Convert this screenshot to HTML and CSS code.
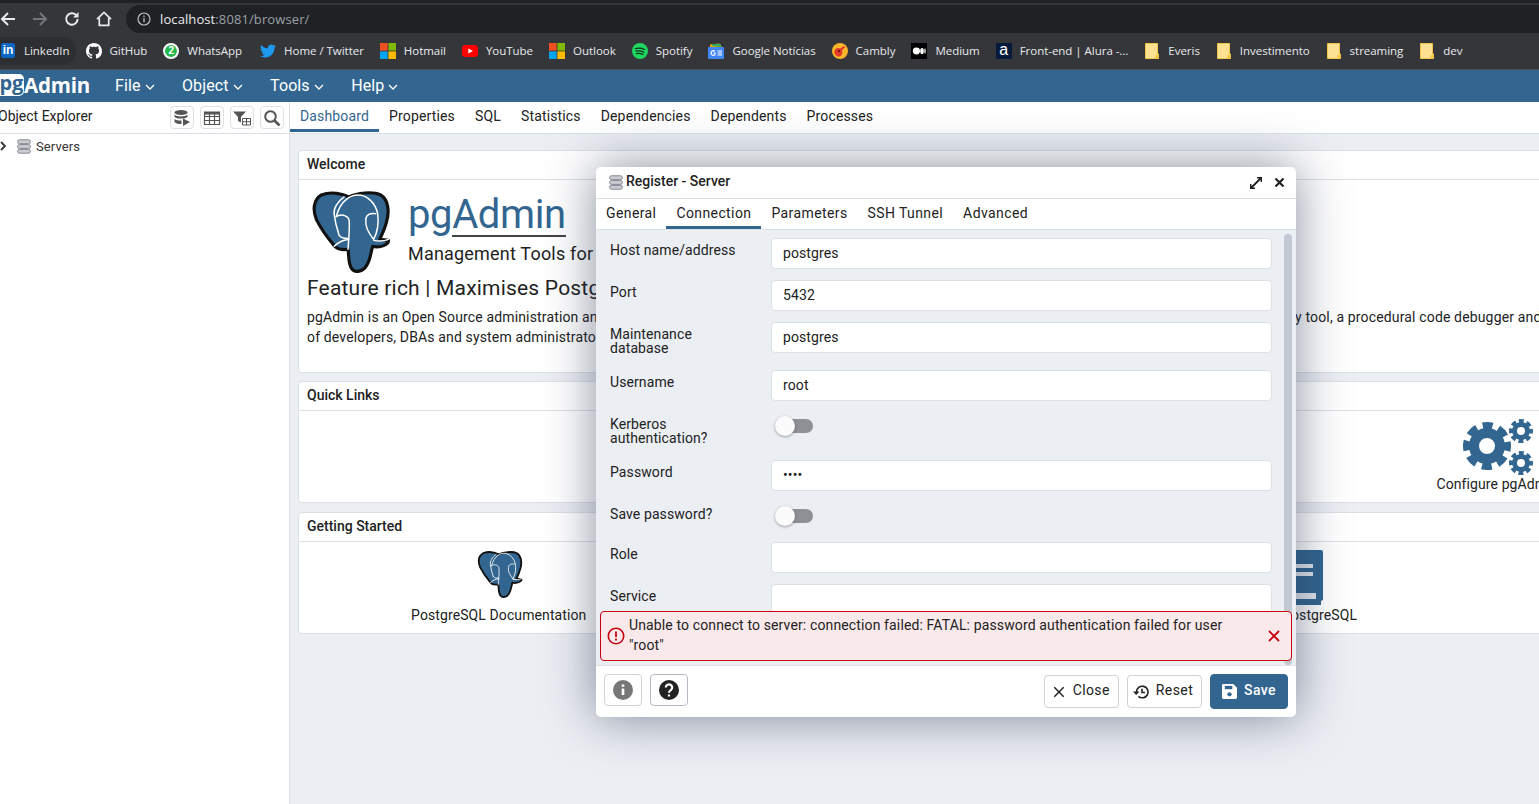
FILE: index.html
```html
<!DOCTYPE html>
<html lang="en">
<head>
<meta charset="utf-8">
<title>pgAdmin 4</title>
<link rel="stylesheet" href="styles.css">
</head>
<body>
<svg class="defs" width="0" height="0" aria-hidden="true">
  <symbol id="elephant" viewBox="1 -1 78 83">
    <path d="M10 3C20-1 32 2 38 5C46 1 62-1 70 3C78 8 79 20 76 30C74 38 71 44 69 48L78 49C78 53 70 57 62 55C60 60 60 68 56 74C52 81 44 82 41 78C37 73 38 65 37 58C30 59 24 57 22 53C16 46 9 36 5 28C1 18 2 8 10 3Z" fill="#326690" stroke="#111" stroke-width="3.200" stroke-linejoin="round"/>
    <path d="M33 5C26 10 22 17 23 23C24 31 26 38 28 44M25 25C30 6 42 3 47 3C57 3 65 12 67 22C68 30 68 38 63 48M25 25C29 22 36 23 38 28C39 35 38 42 37 58M65 22C60 21 55 23 55 28C54 36 58 42 63 48M23 55C27 51 33 48 38 48M63 49C68 50 73 50 78 48M28 44C31 47 33 47 37 47" fill="none" stroke="#fff" stroke-width="1.500" stroke-linecap="round"/>
  </symbol>
  <symbol id="servers" viewBox="0 0 14 15">
    <g fill="#c9ccd3" stroke="#7d8089" stroke-width=".9"><rect x=".6" y=".8" width="12.800" height="3.800" rx="1.800"/><rect x=".6" y="5.600" width="12.800" height="3.800" rx="1.800"/><rect x=".6" y="10.400" width="12.800" height="3.800" rx="1.800"/></g>
  </symbol>
  <symbol id="folder" viewBox="0 0 14 16">
    <path d="M.5.5H12.500V11H13.500V15.500H.5Z" fill="#fde293" stroke="#f4c542"/><path d="M10.500 12H13.500V15.500H10.500Z" fill="#f4c542"/>
  </symbol>
  <symbol id="ms" viewBox="0 0 16 16">
    <rect width="7.600" height="7.600" fill="#f25022"/><rect x="8.400" width="7.600" height="7.600" fill="#7fba00"/><rect y="8.400" width="7.600" height="7.600" fill="#00a4ef"/><rect x="8.400" y="8.400" width="7.600" height="7.600" fill="#ffb900"/>
  </symbol>
  <symbol id="cog" viewBox="-24 -24 48 48">
    <circle r="20" fill="none" stroke="#326690" stroke-width="8" stroke-dasharray="9.700 6.008" stroke-dashoffset="4.850"/>
    <circle r="13" fill="none" stroke="#326690" stroke-width="10"/>
  </symbol>
</svg>

<header class="chrome">
  <svg class="nav-ic" viewBox="0 0 16 16"><path d="M15 8H2M8 2 2 8l6 6" fill="none" stroke="#e8eaed" stroke-width="2"/></svg>
  <svg class="nav-ic dim" viewBox="0 0 16 16"><path d="M1 8H14M8 2l6 6-6 6" fill="none" stroke="#74777c" stroke-width="2"/></svg>
  <svg class="nav-ic" viewBox="0 0 16 16"><path d="M13.600 8a5.700 5.700 0 1 1-1.600-4" fill="none" stroke="#e8eaed" stroke-width="2"/><path d="M14.500 1v5.500H9z" fill="#e8eaed"/></svg>
  <svg class="nav-ic" viewBox="0 0 16 16"><path d="M1 8.200 8 1.500l7 6.700M3.300 7v7.300h9.400V7" fill="none" stroke="#e8eaed" stroke-width="1.700"/></svg>
  <div class="address">
    <svg class="info-ic" viewBox="0 0 14 14"><circle cx="7" cy="7" r="6" fill="none" stroke="#bdc1c6" stroke-width="1.200"/><path d="M7 6v4.200M7 3.600v1.300" stroke="#bdc1c6" stroke-width="1.300"/></svg>
    <span class="host">localhost</span><span class="path">:8081/browser/</span>
  </div>
</header>

<nav class="bookmarks">
  <a class="bm bm-first"><span class="in-ic">in</span>LinkedIn</a>
  <a class="bm"><svg class="bm-ic" viewBox="0 0 16 16"><path fill="#fff" d="M8 0C3.58 0 0 3.58 0 8c0 3.54 2.29 6.53 5.47 7.59.4.07.55-.17.55-.38 0-.19-.01-.82-.01-1.49-2.01.37-2.53-.49-2.69-.94-.09-.23-.48-.94-.82-1.13-.28-.15-.68-.52-.01-.53.63-.01 1.08.58 1.23.82.72 1.21 1.87.87 2.33.66.07-.52.28-.87.51-1.07-1.78-.2-3.64-.89-3.64-3.95 0-.87.31-1.59.82-2.15-.08-.2-.36-1.02.08-2.12 0 0 .67-.21 2.2.82.64-.18 1.32-.27 2-.27.68 0 1.36.09 2 .27 1.53-1.04 2.2-.82 2.2-.82.44 1.1.16 1.92.08 2.12.51.56.82 1.27.82 2.15 0 3.07-1.87 3.75-3.65 3.95.29.25.54.73.54 1.48 0 1.07-.01 1.93-.01 2.2 0 .21.15.46.55.38A8.013 8.013 0 0016 8c0-4.42-3.58-8-8-8z"/></svg>GitHub</a>
  <a class="bm bm-wa"><span class="wa-ic">2</span>WhatsApp</a>
  <a class="bm"><svg class="bm-ic" viewBox="0 0 24 24"><path fill="#1d9bf0" d="M23.953 4.57a10 10 0 01-2.825.775 4.958 4.958 0 002.163-2.723c-.951.555-2.005.959-3.127 1.184a4.92 4.92 0 00-8.384 4.482C7.69 8.095 4.067 6.13 1.64 3.162a4.822 4.822 0 00-.666 2.475c0 1.71.87 3.213 2.188 4.096a4.904 4.904 0 01-2.228-.616v.06a4.923 4.923 0 003.946 4.827 4.996 4.996 0 01-2.212.085 4.936 4.936 0 004.604 3.417 9.867 9.867 0 01-6.102 2.105c-.39 0-.779-.023-1.17-.067a13.995 13.995 0 007.557 2.209c9.053 0 13.998-7.496 13.998-13.985 0-.21 0-.42-.015-.63A9.935 9.935 0 0024 4.59z"/></svg>Home / Twitter</a>
  <a class="bm"><svg class="bm-ic"><use href="#ms"/></svg>Hotmail</a>
  <a class="bm"><svg class="bm-ic" viewBox="0 0 16 16"><rect y="2" width="16" height="12" rx="3.500" fill="#f00"/><path d="M6.300 5.400 11 8l-4.700 2.600z" fill="#fff"/></svg>YouTube</a>
  <a class="bm"><svg class="bm-ic"><use href="#ms"/></svg>Outlook</a>
  <a class="bm"><svg class="bm-ic" viewBox="0 0 16 16"><circle cx="8" cy="8" r="8" fill="#1ed760"/><path d="M3.500 5.600c3-.8 6.200-.6 9 .9M4 8.200c2.600-.7 5.400-.4 7.800 1M4.500 10.700c2.200-.6 4.500-.3 6.500.8" fill="none" stroke="#16331f" stroke-width="1.300" stroke-linecap="round"/></svg>Spotify</a>
  <a class="bm"><svg class="bm-ic" viewBox="0 0 16 16"><path d="M2 4V1.500L11 .5l3 3.500z" fill="#f9ab00"/><path d="M4 3V1h9v3z" fill="#34a853"/><rect y="4" width="16" height="12" rx="1" fill="#4285f4"/><path d="M9.500 8h4.500M9.500 10h4.500M9.500 12h4.500M7 8.300A2.300 2.300 0 1 0 7 11.700V10H5.500" fill="none" stroke="#fff" stroke-width="1.100"/></svg>Google Notícias</a>
  <a class="bm"><svg class="bm-ic" viewBox="0 0 16 16"><circle cx="8" cy="8" r="8" fill="#fbb52b"/><path d="M2.500 8c1-3 4-3.500 5.500-2.500L12 3l1 1.500L10 7c1 2.500 0 6-3 6.500-2.500.3-5-2.500-4.500-5.500z" fill="#e2392c"/><circle cx="7" cy="8" r="1.100" fill="#5d1410"/></svg>Cambly</a>
  <a class="bm"><svg class="bm-ic" viewBox="0 0 16 16"><rect width="16" height="16" fill="#000"/><ellipse cx="5.400" cy="8" rx="3.600" ry="3.400" fill="#fff"/><ellipse cx="11" cy="8" rx="1.800" ry="3.100" fill="#fff"/><ellipse cx="14" cy="8" rx=".7" ry="2.800" fill="#fff"/></svg>Medium</a>
  <a class="bm"><span class="alura-ic">a</span>Front-end | Alura -...</a>
  <a class="bm"><svg class="bm-folder"><use href="#folder"/></svg>Everis</a>
  <a class="bm"><svg class="bm-folder"><use href="#folder"/></svg>Investimento</a>
  <a class="bm"><svg class="bm-folder"><use href="#folder"/></svg>streaming</a>
  <a class="bm"><svg class="bm-folder"><use href="#folder"/></svg>dev</a>
</nav>

<div class="navbar">
  <div class="logo"><span class="logo-pg">pg</span><span class="logo-admin">Admin</span></div>
  <div class="menu">
    <span class="menu-item">File<svg class="caret" viewBox="0 0 10 6"><path d="M1 1l4 4 4-4" fill="none" stroke="#fff" stroke-width="1.300"/></svg></span>
    <span class="menu-item">Object<svg class="caret" viewBox="0 0 10 6"><path d="M1 1l4 4 4-4" fill="none" stroke="#fff" stroke-width="1.300"/></svg></span>
    <span class="menu-item">Tools<svg class="caret" viewBox="0 0 10 6"><path d="M1 1l4 4 4-4" fill="none" stroke="#fff" stroke-width="1.300"/></svg></span>
    <span class="menu-item">Help<svg class="caret" viewBox="0 0 10 6"><path d="M1 1l4 4 4-4" fill="none" stroke="#fff" stroke-width="1.300"/></svg></span>
  </div>
</div>

<main class="workspace">
  <aside class="explorer">
    <div class="explorer-head">
      <span class="explorer-title">Object Explorer</span>
      <div class="tools">
        <button class="tool"><svg viewBox="0 0 18 18"><ellipse cx="8" cy="3.500" rx="6.500" ry="2.500" fill="#555"/><path d="M1.500 5.500c1 2.500 12 2.500 13 0v2.200c-1 2.500-12 2.500-13 0zM1.500 9.700c1 1.500 4.500 2 7 1.900V15c-3 .2-6-.6-7-2z" fill="#555"/><path d="M10 9.500 17 13l-7 4z" fill="#555"/></svg></button>
        <button class="tool"><svg viewBox="0 0 18 18"><path d="M1.500 3.500h15v12h-15zM1.500 7.500h15M1.500 11.500h15M6.500 3.500v12M11.500 3.500v12" fill="none" stroke="#555" stroke-width="1.200"/><rect x="1" y="2.500" width="16" height="3" fill="#555"/></svg></button>
        <button class="tool"><svg viewBox="0 0 18 18"><path d="M0 2.500h13L8 8v5.500L5 12V8z" fill="#555"/><path d="M9.500 9.500h8v6.500h-8zM9.500 12.700h8M13.500 9.500V16" fill="none" stroke="#555" stroke-width="1"/></svg></button>
        <button class="tool"><svg viewBox="0 0 18 18"><circle cx="7.500" cy="7.500" r="5.300" fill="none" stroke="#555" stroke-width="2"/><path d="M11.500 11.500 16.500 16.500" stroke="#555" stroke-width="2.600"/></svg></button>
      </div>
    </div>
    <div class="tree-row">
      <svg class="chev" viewBox="0 0 6 10"><path d="M1 1l4 4-4 4" fill="none" stroke="#333" stroke-width="1.800"/></svg>
      <svg class="tree-ic"><use href="#servers"/></svg>
      <span>Servers</span>
    </div>
  </aside>

  <section class="content">
    <div class="tabs">
      <span class="tab active">Dashboard</span>
      <span class="tab">Properties</span>
      <span class="tab">SQL</span>
      <span class="tab">Statistics</span>
      <span class="tab">Dependencies</span>
      <span class="tab">Dependents</span>
      <span class="tab">Processes</span>
    </div>
    <div class="dashboard">
      <article class="card card-welcome">
        <h3 class="card-head">Welcome</h3>
        <div class="welcome-body">
          <div class="brand">
            <svg class="brand-ic"><use href="#elephant"/></svg>
            <div>
              <div class="brand-title">pg<span class="brand-u">Admin</span></div>
              <div class="brand-sub">Management Tools for PostgreSQL</div>
            </div>
          </div>
          <div class="feature">Feature rich | Maximises PostgreSQL | Open Source</div>
          <p class="para">pgAdmin is an Open Source administration and management tool for the PostgreSQL database. It includes a graphical administration interface, an SQL query tool, a procedural code debugger and much more. The tool is designed to answer the needs<br>of developers, DBAs and system administrators alike.</p>
        </div>
      </article>
      <article class="card card-links">
        <h3 class="card-head">Quick Links</h3>
        <div class="links links-2">
          <div class="link"><svg class="link-cogs" viewBox="0 0 72 56"><use href="#cog" x="1" y="3" width="48" height="48"/><use href="#cog" x="47" y="0" width="24" height="24"/><use href="#cog" x="47" y="32" width="24" height="24"/></svg><span>Add New Server</span></div>
          <div class="link"><svg class="link-cogs" viewBox="0 0 72 56"><use href="#cog" x="1" y="3" width="48" height="48"/><use href="#cog" x="47" y="0" width="24" height="24"/><use href="#cog" x="47" y="32" width="24" height="24"/></svg><span>Configure pgAdmin</span></div>
        </div>
      </article>
      <article class="card card-start">
        <h3 class="card-head">Getting Started</h3>
        <div class="links links-4">
          <div class="link"><svg class="link-ele"><use href="#elephant"/></svg><span>PostgreSQL Documentation</span></div>
          <div class="link"><svg class="link-book" viewBox="0 0 50 56"></svg><span>pgAdmin Website</span></div>
          <div class="link"><svg class="link-book" viewBox="0 0 50 56"><path d="M4 0H48a2 2 0 0 1 2 2V50l-2 1v4H4a4 4 0 0 1-4-4V4a4 4 0 0 1 4-4Z" fill="#326690"/><path d="M12 14H40V18H12ZM12 22H40V26H12ZM5 43H43V49H5Z" fill="#e4e8ee"/></svg><span>Planet PostgreSQL</span></div>
          <div class="link"><svg class="link-book" viewBox="0 0 50 56"></svg><span>Community Support</span></div>
        </div>
      </article>
    </div>
  </section>
</main>

<div class="modal" role="dialog">
  <div class="modal-title">
    <svg class="title-ic"><use href="#servers"/></svg>
    <span class="title-text">Register - Server</span>
    <svg class="expand" viewBox="0 0 12 12"><path d="M1 11 11 1M7 .5h4.500V5M.5 7v4.500H5" fill="none" stroke="#222" stroke-width="1.800"/></svg>
    <svg class="x" viewBox="0 0 11 11"><path d="M1.500 1.500l8 8m0-8-8 8" fill="none" stroke="#222" stroke-width="2.200"/></svg>
  </div>
  <div class="modal-tabs">
    <span class="tab">General</span>
    <span class="tab active">Connection</span>
    <span class="tab">Parameters</span>
    <span class="tab">SSH Tunnel</span>
    <span class="tab">Advanced</span>
  </div>
  <div class="modal-body">
    <div class="scrollthumb"></div>
    <form class="form">
      <div class="row"><label class="lab">Host name/address</label><input class="inp" value="postgres"></div>
      <div class="row"><label class="lab">Port</label><input class="inp" value="5432"></div>
      <div class="row"><label class="lab">Maintenance database</label><input class="inp" value="postgres"></div>
      <div class="row"><label class="lab">Username</label><input class="inp" value="root"></div>
      <div class="row"><label class="lab">Kerberos authentication?</label><div class="toggle-wrap"><span class="toggle"></span></div></div>
      <div class="row"><label class="lab">Password</label><input class="inp" type="password" value="root"></div>
      <div class="row"><label class="lab">Save password?</label><div class="toggle-wrap"><span class="toggle"></span></div></div>
      <div class="row"><label class="lab">Role</label><input class="inp" value=""></div>
      <div class="row"><label class="lab">Service</label><input class="inp" value=""></div>
    </form>
    <div class="alert">
      <svg class="alert-ic" viewBox="0 0 18 18"><circle cx="9" cy="9" r="7.700" fill="none" stroke="#c8000f" stroke-width="1.600"/><path d="M9 4.500v5.500M9 11.600v1.800" stroke="#c8000f" stroke-width="1.800"/></svg>
      <div class="alert-text">Unable to connect to server: connection failed: FATAL: password authentication failed for user "root"</div>
      <svg class="alert-x" viewBox="0 0 12 12"><path d="M1 1l10 10m0-10L1 11" fill="none" stroke="#c8000f" stroke-width="1.800"/></svg>
    </div>
  </div>
  <div class="modal-foot">
    <button class="btn square"><svg viewBox="0 0 20 20"><circle cx="10" cy="10" r="10" fill="#777"/><path d="M10 8.500V15M10 4.500v2.200" stroke="#fff" stroke-width="2.600"/></svg></button>
    <button class="btn square strong"><svg viewBox="0 0 20 20"><circle cx="10" cy="10" r="10" fill="#222"/><path d="M6.800 7.500a3.200 3.200 0 1 1 5 2.700c-1.200.8-1.800 1.300-1.800 2.600M10 14.500v2" fill="none" stroke="#fff" stroke-width="2.200"/></svg></button>
    <span class="spacer"></span>
    <button class="btn btn-close"><svg class="btn-ic" viewBox="0 0 14 14"><path d="M1.500 1.500l11 11m0-11-11 11" fill="none" stroke="#222" stroke-width="1.700"/></svg><span class="btn-label">Close</span></button>
    <button class="btn btn-reset"><svg class="btn-ic" viewBox="0 0 17 16"><path d="M3.500 8a5.800 5.800 0 1 1 1.900 4.300M9 4.800v3.700h3" fill="none" stroke="#222" stroke-width="1.600"/><path d="M0 7.500h6.500L3.200 11z" fill="#222"/></svg><span class="btn-label">Reset</span></button>
    <button class="btn primary"><svg class="btn-ic" viewBox="0 0 16 16"><path d="M1.500 0H12l4 4v10.500a1.500 1.500 0 0 1-1.500 1.500h-13A1.500 1.500 0 0 1 0 14.500v-13A1.500 1.500 0 0 1 1.500 0Z" fill="#fff"/><rect x="3" y="2" width="8" height="3.500" fill="#326690"/><circle cx="8" cy="11" r="2.300" fill="#326690"/></svg><span class="btn-label">Save</span></button>
  </div>
</div>
</body>
</html>
```
FILE: styles.css
```css
* { box-sizing: border-box; }
html, body { height: 100%; }
body {
  margin: 0;
  overflow: hidden;
  font-family: Roboto, "Liberation Sans", sans-serif;
  font-size: 14px;
  letter-spacing: .1px;
  color: #222;
  background: #fff;
  display: flex;
  flex-direction: column;
}
.defs { position: absolute; }

/* browser chrome */
.chrome {
  height: 36px;
  flex: none;
  display: flex;
  align-items: center;
  padding-bottom: 1px;
  background: #35363a;
  border-top: 3px solid #202124;
  gap: 16px;
}
.nav-ic { width: 16px; height: 16px; flex: none; }
.address {
  flex: 1;
  height: 28px;
  margin-left: -2px;
  background: #202124;
  border-radius: 14px 0 0 14px;
  display: flex;
  align-items: center;
  padding-left: 11px;
  font-family: "Open Sans", sans-serif;
  font-size: 13px;
  letter-spacing: .1px;
}
.info-ic { width: 14px; height: 14px; margin-right: 9px; }
.host { color: #e8eaed; }
.path { color: #9aa0a6; }

.bookmarks {
  height: 34px;
  flex: none;
  display: flex;
  align-items: center;
  gap: 16px;
  padding-bottom: 4px;
  background: #35363a;
  border-bottom: 1px solid #4a4b4f;
  font-family: "Open Sans", sans-serif;
  font-size: 11.500px;
  letter-spacing: -.03px;
  color: #e8eaed;
}
.bm { display: flex; align-items: center; gap: 8px; white-space: nowrap; height: 28px; }
.bm-first { background: #2d2e31; border-radius: 0 14px 14px 0; padding-left: 1px; padding-right: 6px; margin-right: -6px; }
.bm-wa { margin-right: 2px; }
.bm-ic { width: 16px; height: 16px; flex: none; }
.bm-folder { width: 14px; height: 16px; flex: none; margin-left: 1px; margin-right: 1px; }
.in-ic {
  width: 14px; height: 15px;
  background: #0a66c2;
  color: #fff;
  font: 700 12px/15px "Liberation Sans", sans-serif;
  letter-spacing: 0;
  text-align: center;
  border-radius: 2px;
  margin-right: 1px;
}
.wa-ic {
  width: 16px; height: 16px;
  border: 2px solid #fff;
  border-radius: 50%;
  background: #25b84c;
  color: #fff;
  font: 700 10px/12px "Liberation Sans", sans-serif;
  letter-spacing: 0;
  text-align: center;
}
.alura-ic {
  width: 16px; height: 16px;
  background: #061a3c;
  color: #fff;
  font: 400 16px/14px "Liberation Sans", sans-serif;
  letter-spacing: 0;
  text-align: center;
}

/* app bar */
.navbar {
  height: 32px;
  flex: none;
  display: flex;
  align-items: center;
  padding-bottom: 2px;
  background: #326690;
  color: #fff;
}
.logo { width: 115px; display: flex; align-items: center; flex: none; }
.logo-pg {
  width: 24px; height: 22px;
  display: flex;
  justify-content: flex-end;
  background: #fff;
  color: #326690;
  border-radius: 0 5px 5px 0;
  font: 700 20px/18px "Open Sans", sans-serif;
  letter-spacing: -.2px;
  padding-right: 1px;
  overflow: hidden;
}
.logo-admin { font: 700 20.500px/22px "Open Sans", sans-serif; letter-spacing: -.2px; color: #fff; }
.menu { display: flex; gap: 27.500px; font-size: 16px; letter-spacing: .1px; }
.menu-item { display: flex; align-items: center; gap: 4px; }
.caret { width: 10px; height: 6px; margin-top: 3px; }

/* layout */
.workspace { flex: 1; display: flex; min-height: 0; }
.explorer { width: 290px; flex: none; border-right: 1px solid #dde0e6; }
.explorer-head {
  height: 32px;
  display: flex;
  align-items: center;
  border-bottom: 1px solid #dde0e6;
  padding-right: 5px;
}
.explorer-title { margin-left: -2px; padding-bottom: 3px; flex: 1; letter-spacing: 0; white-space: nowrap; }
.tools { display: flex; gap: 6px; }
.tool {
  width: 24px; height: 23px;
  padding: 0;
  background: #fff;
  border: 1px solid #dde0e6;
  border-radius: 4px;
  display: flex; align-items: center; justify-content: center;
}
.tool svg { width: 18px; height: 18px; }
.tree-row { height: 24px; display: flex; align-items: center; font-size: 13px; color: #333; }
.chev { width: 6px; height: 10px; margin-right: 11px; }
.tree-ic { width: 14px; height: 15px; margin-right: 5px; }

.content { flex: 1; min-width: 0; display: flex; flex-direction: column; background: #ebeef3; overflow: hidden; }
.tabs {
  height: 32px;
  flex: none;
  display: flex;
  background: #fff;
  border-bottom: 1px solid #dde0e6;
  letter-spacing: .15px;
}
.tab { padding: 0 10px; line-height: 28px; height: 30px; color: #222; white-space: nowrap; }
.tab.active { color: #326690; border-bottom: 3px solid #326690; }
.modal-tabs .tab { letter-spacing: .4px; }
.modal-tabs .tab.active { color: #222; }

.dashboard { width: 1600px; margin-left: 8px; padding-top: 16px; }
.card { background: #fff; border: 1px solid #dde0e6; border-radius: 4px; }
.card-welcome { height: 223px; margin-bottom: 8px; }
.card-links { height: 122px; margin-bottom: 9px; }
.card-start { height: 122px; }
.card-head {
  margin: 0;
  height: 29px;
  padding: 0 8px;
  font-size: 14px;
  line-height: 27px;
  font-weight: 500;
  letter-spacing: 0;
  border-bottom: 1px solid #dde0e6;
}
.welcome-body { padding: 11px 8px 0; }
.brand { display: flex; height: 82px; }
.brand-ic { width: 80px; height: 82px; margin: 0 17px 0 4px; flex: none; }
.brand-title { font-size: 40px; line-height: 46px; color: #326690; letter-spacing: -.4px; margin-top: 1px; }
.brand-u { border-bottom: 2px solid #444; display: inline-block; line-height: 40px; }
.brand-sub { font-size: 18px; line-height: 26px; margin-top: 3px; letter-spacing: .2px; white-space: nowrap; }
.feature { font-size: 21px; line-height: 30px; margin-top: 0; white-space: nowrap; letter-spacing: .2px; }
.para { margin: 4px 0 0; line-height: 20px; white-space: nowrap; letter-spacing: .15px; }

.links { display: grid; }
.links-2 { grid-template-columns: repeat(2, 1fr); }
.links-4 { grid-template-columns: repeat(4, 1fr); }
.link { display: flex; flex-direction: column; align-items: center; }
.card-links .link { padding-top: 8px; }
.card-start .link { padding-top: 8px; }
.link-cogs { width: 72px; height: 56px; margin-bottom: 1px; }
.link-ele { width: 46px; height: 47px; margin: 1px 0 9px 2px; }
.link-book { width: 50px; height: 56px; margin-bottom: 1px; }

/* dialog */
.modal {
  position: absolute;
  left: 596px; top: 167px;
  width: 700px; height: 550px;
  display: flex;
  flex-direction: column;
  background: #fff;
  border-radius: 5px;
  box-shadow: 0 0 50px rgba(35,45,75,.55);
  overflow: hidden;
}
.modal-title {
  height: 32px;
  flex: none;
  display: flex;
  align-items: center;
  padding: 0 11px 0 13px;
  border-bottom: 1px solid #dde0e6;
}
.title-ic { width: 14px; height: 15px; margin-right: 3px; }
.title-text { flex: 1; font-weight: 500; letter-spacing: 0; padding-bottom: 3px; }
.expand { width: 12px; height: 12px; margin-right: 12px; }
.x { width: 11px; height: 11px; }
.modal-tabs {
  height: 31px;
  flex: none;
  display: flex;
  border-bottom: 1px solid #dde0e6;
}
.modal-body {
  position: relative;
  flex: 1;
  min-height: 0;
  overflow: hidden;
  background: #ebeef3;
}
.scrollthumb {
  position: absolute;
  top: 4px; right: 4px; bottom: 0;
  width: 8px;
  background: #c1c8d3;
  border-radius: 4px;
}
.form { padding: 8px 24px 0 14px; }
.row { display: flex; align-items: flex-start; margin-bottom: 11px; }
.lab { width: 161px; flex: none; padding: 5px 20px 4px 0; line-height: 14px; color: #222; }
.inp {
  flex: 1;
  min-width: 0;
  height: 31px;
  padding: 0 11px 2px;
  border: 1px solid #dde0e6;
  border-radius: 4px;
  background: #fff;
  color: #222;
  font: inherit;
  letter-spacing: inherit;
}
.toggle-wrap { height: 29px; display: flex; align-items: center; padding: 0 0 2px 5px; }
.toggle {
  position: relative;
  display: block;
  width: 37px; height: 14px;
  border-radius: 7px;
  background: #8f9095;
}
.toggle::before {
  content: "";
  position: absolute;
  left: -1px; top: -3px;
  width: 20px; height: 20px;
  border-radius: 50%;
  background: #fbfbfb;
  box-shadow: 0 1px 3px rgba(0,0,0,.35);
}
.alert {
  position: absolute;
  left: 4px; right: 4px; bottom: 4px;
  height: 50px;
  display: flex;
  align-items: center;
  padding: 0 11px 0 6px;
  background: #fae9ea;
  border: 1px solid #c8000f;
  border-radius: 4px;
  color: #222;
}
.alert-ic { width: 18px; height: 18px; flex: none; margin-right: 4px; }
.alert-text { width: 615px; line-height: 20px; flex: none; padding-bottom: 2px; letter-spacing: .13px; }
.alert-x { width: 12px; height: 12px; margin-left: auto; }
.modal-foot {
  height: 52px;
  flex: none;
  display: flex;
  align-items: center;
  gap: 8px;
  padding: 0 8px;
  border-top: 1px solid #dde0e6;
  border-radius: 0 0 5px 5px;
}
.spacer { flex: 1; }
.btn {
  height: 33px;
  padding: 0 8px;
  display: flex;
  align-items: center;
  gap: 8px;
  background: #fff;
  border: 1px solid #cfd3da;
  border-radius: 4px;
  color: #222;
  font: inherit;
  letter-spacing: .4px;
}
.btn-label { padding-bottom: 4px; }
.btn.square { width: 38px; height: 32px; justify-content: center; padding: 0; margin-bottom: 3px; }
.btn.square svg { width: 20px; height: 20px; }
.btn.strong { border-color: #b5bac4; }
.btn-ic { width: 12px; height: 12px; }
.btn-reset { padding: 0 8px 0 5px; gap: 6px; }
.btn-reset .btn-ic { width: 17px; height: 16px; }
.btn.primary {
  height: 35px;
  padding: 0 11px;
  gap: 7px;
  background: #326690;
  border-color: #326690;
  color: #fff;
  font-weight: 500;
}
.btn.primary .btn-ic { width: 15px; height: 15px; }
```
